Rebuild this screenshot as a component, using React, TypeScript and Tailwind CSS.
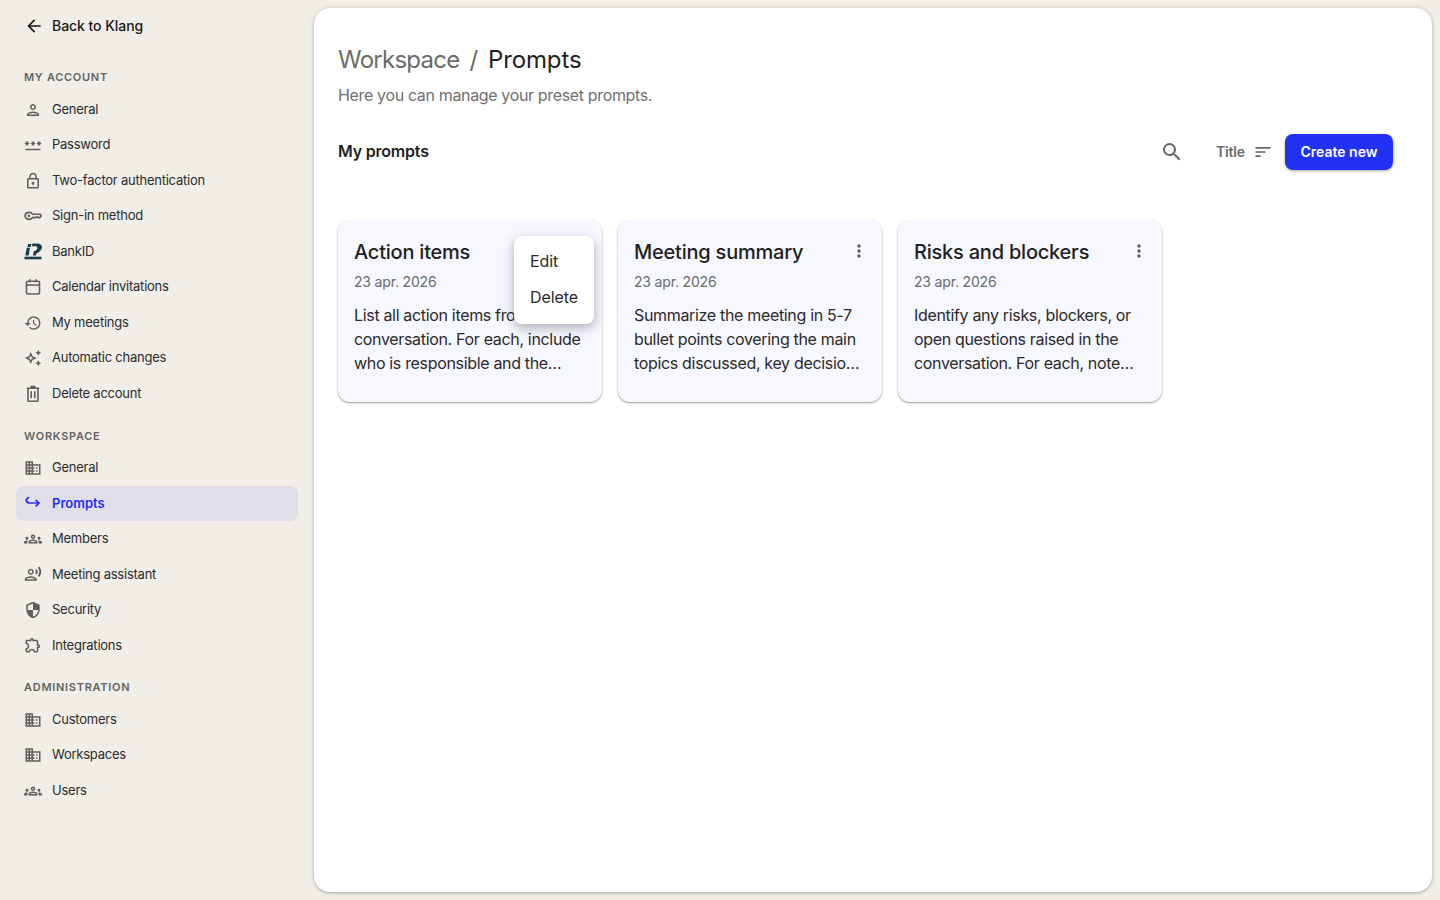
import React from 'react';
import {
  MdArrowBack, MdOutlinePerson, MdOutlinePassword, MdLockOutline, MdHistory, MdOutlineAutoAwesome,
  MdOutlineDomain, MdOutlineGroups, MdOutlineRecordVoiceOver, MdSecurity, MdOutlineExtension, MdSearch, MdSort, MdMoreVert,
} from 'react-icons/md';

const KeyIcon = () => (
  <svg viewBox="0 0 18 18" className="w-[18px] h-[18px]" fill="none" stroke="currentColor" strokeWidth="1.6">
    <path d="M5 5.400c1.600 0 2.900.7 3.500 1.800h7.700l1.100 1.700-1.500 1.700h-1l-.9-.7-.9.7-.9-.7-.9.7H8.500C7.900 11.700 6.600 12.400 5 12.400c-2.200 0-3.900-1.500-3.900-3.500S2.800 5.400 5 5.400z" />
    <circle cx="4.800" cy="8.900" r="1.300" fill="currentColor" stroke="none" />
  </svg>
);

const CalendarIcon = () => (
  <svg viewBox="0 0 18 18" className="w-[18px] h-[18px]" fill="none" stroke="currentColor" strokeWidth="1.6">
    <rect x="2.500" y="3.200" width="13" height="12.800" rx="1.400" />
    <path d="M2.500 7h13M5.800 1.200v3M12.200 1.200v3" />
  </svg>
);

const TrashIcon = () => (
  <svg viewBox="0 0 18 18" className="w-[18px] h-[18px]" fill="none" stroke="currentColor" strokeWidth="1.6">
    <path d="M2.800 3.300h12.400M4 3.300v12.100c0 .5.400.9.900.9h8.200c.5 0 .9-.4.900-.9V3.300M6.500 1.600h5" />
    <path d="M7.200 6.200v7M10.800 6.200v7" />
  </svg>
);

const BankIdIcon = () => (
  <svg viewBox="0 0 18 17" className="w-[18px] h-[17px]" fill="#193e4f">
    <path d="M2.700 4.800h3.300L4.700 12.400H1.300z" />
    <path d="M4.100 .9h3.300l-.6 3.100H3.500z" />
    <path d="M8.400.4h4.900c3.400 0 5.100 1.900 4.500 4.600-.6 2.500-2.600 4.700-5.400 5.400l-.5 2H8.900l1-4.400c1.800-.2 3.100-1.200 3.400-2.600.3-1.300-.5-2.100-1.900-2.100H7.900z" />
    <rect x="0.500" y="13.700" width="17" height="2.600" />
  </svg>
);

const PromptsIcon = () => (
  <svg viewBox="0 0 18 18" className="w-[18px] h-[18px]" fill="none" stroke="#2330f5" strokeWidth="1.7">
    <path d="M5 3.200 2.200 5.600c0 0 .2 3 2.800 3.400h9.600" />
    <path d="M11.600 5.800 15 9.100l-3.400 3.200" />
  </svg>
);

type Item = { label: string; icon: React.ReactNode; active?: boolean };

const ic = 'w-[18px] h-[18px]';

const sections: { title: string; items: Item[] }[] = [
  {
    title: 'MY ACCOUNT',
    items: [
      { label: 'General', icon: <MdOutlinePerson className={ic} /> },
      { label: 'Password', icon: <MdOutlinePassword className={ic} /> },
      { label: 'Two-factor authentication', icon: <MdLockOutline className={ic} /> },
      { label: 'Sign-in method', icon: <KeyIcon /> },
      { label: 'BankID', icon: <BankIdIcon /> },
      { label: 'Calendar invitations', icon: <CalendarIcon /> },
      { label: 'My meetings', icon: <MdHistory className={ic} /> },
      { label: 'Automatic changes', icon: <MdOutlineAutoAwesome className={ic} /> },
      { label: 'Delete account', icon: <TrashIcon /> },
    ],
  },
  {
    title: 'WORKSPACE',
    items: [
      { label: 'General', icon: <MdOutlineDomain className={ic} /> },
      { label: 'Prompts', icon: <PromptsIcon />, active: true },
      { label: 'Members', icon: <MdOutlineGroups className={ic} /> },
      { label: 'Meeting assistant', icon: <MdOutlineRecordVoiceOver className={ic} /> },
      { label: 'Security', icon: <MdSecurity className={ic} /> },
      { label: 'Integrations', icon: <MdOutlineExtension className={ic} /> },
    ],
  },
  {
    title: 'ADMINISTRATION',
    items: [
      { label: 'Customers', icon: <MdOutlineDomain className={ic} /> },
      { label: 'Workspaces', icon: <MdOutlineDomain className={ic} /> },
      { label: 'Users', icon: <MdOutlineGroups className={ic} /> },
    ],
  },
];

const prompts = [
  {
    title: 'Action items',
    body: 'List all action items from the conversation. For each, include who is responsible and the deadline if one was mentioned in the meeting.',
    menu: true,
  },
  {
    title: 'Meeting summary',
    body: 'Summarize the meeting in 5-7 bullet points covering the main topics discussed, key decisions and next steps for the team.',
  },
  {
    title: 'Risks and blockers',
    body: 'Identify any risks, blockers, or open questions raised in the conversation. For each, note who raised it and what was agreed.',
  },
];

const App = () => {
  return (
    <div className="flex h-[900px] w-[1440px] overflow-hidden bg-[#f0eee7] font-['Inter',sans-serif] text-[#1f1f1f]">
      {/* Sidebar */}
      <aside className="w-[314px] shrink-0 pl-4 pr-4">
        <div className="mb-[10.75px] flex h-[51px] items-center gap-2 pl-2 text-[14px] font-medium tracking-[-0.05px] text-[#1a1a1a]">
          <MdArrowBack className="w-5 h-5" />
          <span className="pb-[1px]">Back to Klang</span>
        </div>
        {sections.map((s) => (
          <div key={s.title} className="mb-[8.75px]">
            <div className="mt-[6px] mb-[5px] flex h-[25px] items-end pl-2 pb-[1px] text-[11px] font-semibold tracking-[0.72px] text-[#66645f]">
              {s.title}
            </div>
            {s.items.map((item) => (
              <div
                key={item.label}
                className={
                  item.active
                    ? 'flex h-[35.5px] items-center rounded-lg bg-[#e0dfe9] pl-2 text-[13px] font-semibold text-[#2330f5]'
                    : 'flex h-[35.5px] items-center rounded-lg pl-2 text-[13px] tracking-[-0.24px] text-[#2c2c2c]'
                }
              >
                <span className={item.active ? 'flex w-[28px] shrink-0 items-center text-[#2330f5]' : 'flex w-[28px] shrink-0 items-center text-[#5f5f5b]'}>
                  {item.icon}
                </span>
                {item.label}
              </div>
            ))}
          </div>
        ))}
      </aside>

      {/* Main panel */}
      <main className="mt-2 mb-2 mr-2 flex-1 rounded-2xl bg-white px-6 pt-[34px] shadow-[0_1px_3px_rgba(0,0,0,0.25),0_0_6px_rgba(0,0,0,0.08)]">
        <h1 className="flex gap-[10px] text-[24px] leading-9 text-[#1f1f1f]">
          <span className="tracking-[-0.75px] text-[#6b6b6b]">Workspace</span>
          <span className="text-[#6b6b6b]">/</span>
          <span className="tracking-[-0.15px]">Prompts</span>
        </h1>
        <p className="mt-[5px] text-[16px] leading-6 tracking-[-0.35px] text-[#6f6f6f]">Here you can manage your preset prompts.</p>

        <div className="mt-[27px] flex h-[36px] items-center pr-[15px]">
          <h2 className="mb-[2px] text-[16px] font-semibold tracking-[-0.2px] text-[#1f1f1f]">My prompts</h2>
          <MdSearch className="ml-auto w-6 h-6 text-[#666666]" />
          <span className="ml-[32px] pb-[1px] text-[14px] font-semibold tracking-[-0.15px] text-[#6b6b6b]">Title</span>
          <MdSort className="ml-2 w-[20px] h-[20px] text-[#666666]" />
          <button type="button" className="ml-[12px] h-[36px] w-[108px] rounded-lg bg-[#2330f5] pb-[2px] text-[14px] font-semibold text-white shadow-[0_1px_3px_rgba(0,0,0,0.35)]">
            Create new
          </button>
        </div>

        <div className="mt-[50px] flex gap-4">
          {prompts.map((p) => (
            <div key={p.title} className="relative h-[182px] w-[264px] rounded-xl bg-[#f7f7ff] p-4 shadow-[0_1px_2px_rgba(0,0,0,0.4)]">
              <div className="flex items-center justify-between">
                <h3 className="text-[20px] font-medium leading-[32px] tracking-[-0.22px] text-[#1f1f1f]">{p.title}</h3>
                <MdMoreVert className="-mr-[3px] mb-[2px] w-5 h-5 text-[#5c5c5c]" />
              </div>
              <div className="mt-[2px] text-[14px] leading-6 tracking-[-0.17px] text-[#6b6b6b]">23 apr. 2026</div>
              <p className="mt-[9px] line-clamp-3 text-[16px] leading-6 tracking-[-0.33px] text-[#2a2a2a]">{p.body}</p>
              {p.menu && (
                <div className="absolute left-[176px] top-[16px] w-[80px] rounded-lg bg-white pt-[7px] pb-[9px] shadow-[0_4px_12px_rgba(0,0,0,0.3)]">
                  <div className="flex h-9 items-center pl-4 text-[16px] tracking-[-0.1px] text-[#2a2a2a]">Edit</div>
                  <div className="flex h-9 items-center pl-4 text-[16px] tracking-[-0.1px] text-[#2a2a2a]">Delete</div>
                </div>
              )}
            </div>
          ))}
        </div>
      </main>
    </div>
  );
};

export default App;
